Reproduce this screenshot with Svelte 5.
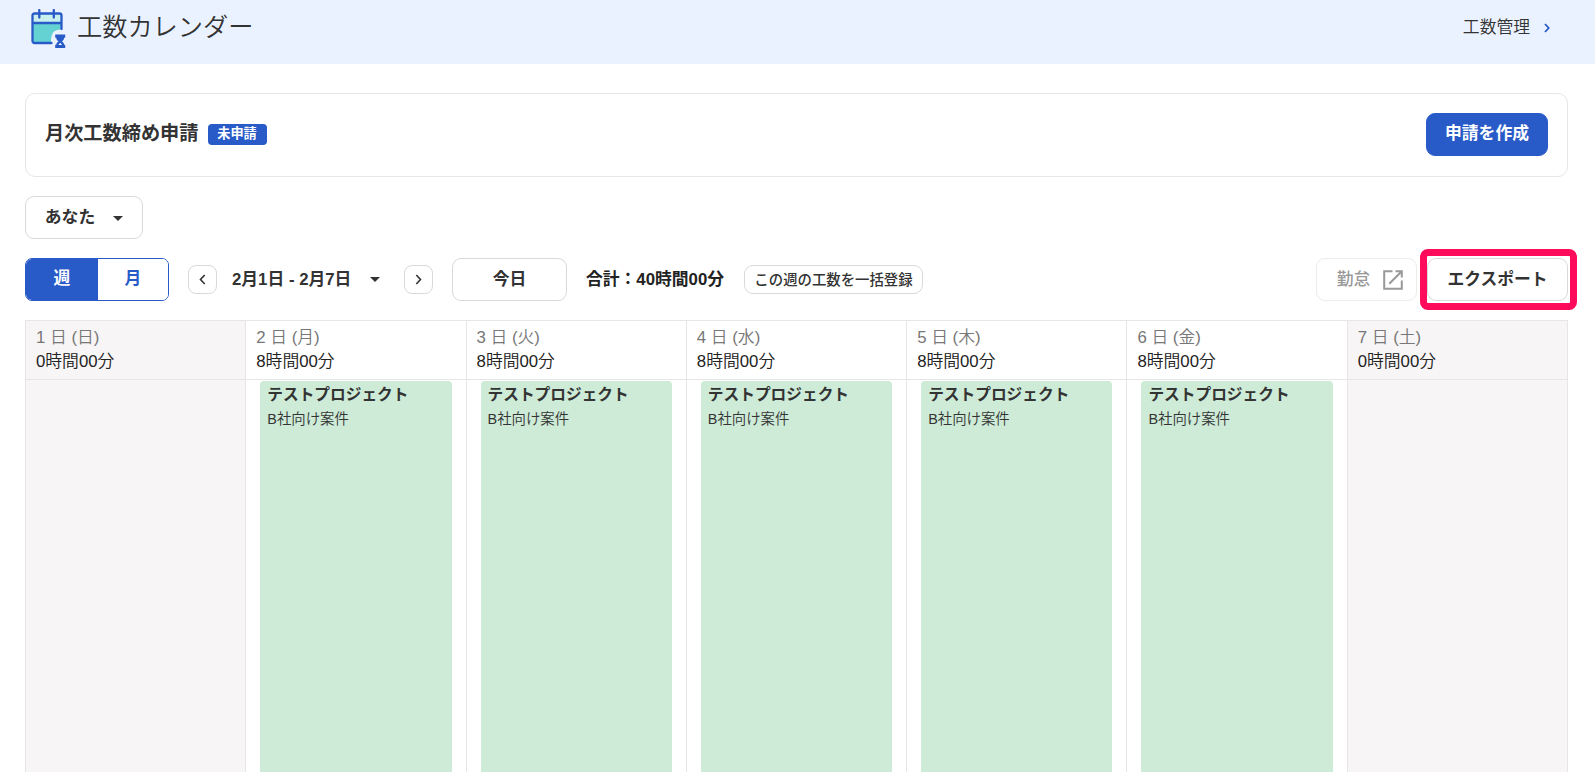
<script lang="ts">
  type Entry = { project: string; task: string };
  type Day = { date: number; weekday: string; total: string; holiday: boolean; entries: Entry[] };

  const weekdays = ["日", "月", "火", "水", "木", "金", "土"];

  const days: Day[] = weekdays.map((weekday, i) => {
    const holiday = i === 0 || i === 6;
    return {
      date: i + 1,
      weekday,
      total: holiday ? "0時間00分" : "8時間00分",
      holiday,
      entries: holiday ? [] : [{ project: "テストプロジェクト", task: "B社向け案件" }],
    };
  });

  let mode = $state<"week" | "month">("week");
</script>

<div class="page">
  <header>
    <svg class="logo" width="38" height="40" viewBox="0 0 38 40" fill="none">
      <path d="M2.500 14V6.500a2 2 0 0 1 2-2h25a2 2 0 0 1 2 2V14z" fill="#c9efee" />
      <path d="M2.500 14h29v6.500q-10-1-10.500 10v4.500H4.500a2 2 0 0 1-2-2z" fill="#64d2d2" />
      <path
        d="M21.500 34H4.500a2 2 0 0 1-2-2V6.500a2 2 0 0 1 2-2h25a2 2 0 0 1 2 2V20M2.500 14h29M9.300 1v7.500M23.800 1v7.500"
        stroke="#285ac8"
        stroke-width="2.300"
        stroke-linecap="round"
      />
      <path
        d="M25.200 25.500h10v3.200h-1.100c0 1.700-1 2.800-2.300 3.600 1.300.9 2.300 2 2.300 3.500h1.100V39h-10v-3.200h1.100c0-1.500 1-2.600 2.300-3.500-1.300-.8-2.300-1.900-2.300-3.600h-1.100z"
        fill="#285ac8"
      />
      <path d="M30.200 33.800l1.900 2.200h-3.800z" fill="#ebf2ff" />
    </svg>
    <h1>工数カレンダー</h1>
    <a class="crumb" href="#manage">
      <span>工数管理</span>
      <svg width="6" height="10" viewBox="0 0 6 10" fill="none">
        <path d="M1 1l3.700 4L1 9" stroke="#285ac8" stroke-width="1.800" />
      </svg>
    </a>
  </header>

  <main>
    <section class="card">
      <h2>月次工数締め申請</h2>
      <span class="badge">未申請</span>
      <button class="btn primary">申請を作成</button>
    </section>

    <button class="btn user">
      あなた
      <span class="caret"></span>
    </button>

    <div class="toolbar">
      <div class="segment">
        <button class:active={mode === "week"} onclick={() => (mode = "week")}>週</button>
        <button class:active={mode === "month"} onclick={() => (mode = "month")}>月</button>
      </div>

      <button class="step prev" aria-label="前の週">
        <svg width="7" height="11" viewBox="0 0 7 11" fill="none">
          <path d="M5.700 1L1.500 5.500l4.200 4.500" stroke="#333" stroke-width="1.600" />
        </svg>
      </button>
      <button class="range">
        <span>2月1日 - 2月7日</span>
        <span class="caret"></span>
      </button>
      <button class="step next" aria-label="次の週">
        <svg width="7" height="11" viewBox="0 0 7 11" fill="none">
          <path d="M1.300 1l4.200 4.500L1.300 10" stroke="#333" stroke-width="1.600" />
        </svg>
      </button>

      <button class="btn today">今日</button>
      <span class="sum">合計：40時間00分</span>
      <button class="bulk">この週の工数を一括登録</button>

      <div class="right">
        <button class="btn attendance" disabled>
          勤怠
          <svg width="20" height="20" viewBox="0 0 20 20" fill="none" stroke="#999" stroke-width="2">
            <path d="M9.500 1.200H1.200v17.600h17.600V10.500M12.500 1.200h6.300v6.300M18.500 1.500L6.300 13.700" />
          </svg>
        </button>
        <div class="export-wrap">
          <button class="btn export">エクスポート</button>
        </div>
      </div>
    </div>

    <div class="calendar">
      {#each days as day (day.date)}
        <div class="day" class:holiday={day.holiday}>
          <div class="head">
            <div class="date">{day.date} 日 ({day.weekday})</div>
            <div>{day.total}</div>
          </div>
          {#each day.entries as entry}
            <div class="entry">
              <b>{entry.project}</b>
              <span>{entry.task}</span>
            </div>
          {/each}
        </div>
      {/each}
    </div>
  </main>
</div>

<style>
  :global(body) {
    margin: 0;
    background: #fff;
  }
  .page {
    height: 772px;
    overflow: hidden;
    display: flex;
    flex-direction: column;
    font-family: "Liberation Sans", "Noto Sans CJK JP", sans-serif;
    font-size: 16.800px;
    color: #333;
  }
  .page * {
    box-sizing: border-box;
  }
  header {
    flex: none;
    height: 64px;
    padding: 0 45px 10px 30px;
    display: flex;
    align-items: center;
    background: #ebf2ff;
  }
  .logo {
    margin-top: 4px;
  }
  h1 {
    margin: 0 auto 0 9px;
    font-size: 25.200px;
    font-weight: 350;
    line-height: 36px;
  }
  .crumb {
    display: flex;
    align-items: center;
    gap: 14px;
    font-weight: 350;
    color: #333;
    text-decoration: none;
  }
  .crumb span {
    padding-bottom: 2px;
  }
  .crumb svg {
    margin-top: 2px;
  }
  main {
    flex: 1;
    min-height: 0;
    padding: 29px 27px 0 25px;
    display: flex;
    flex-direction: column;
  }
  button {
    padding: 0;
    font: inherit;
    color: inherit;
    background: #fff;
    border: 0;
  }
  .card {
    flex: none;
    height: 84px;
    padding: 0 19px 2px;
    display: flex;
    align-items: center;
    border: 1px solid #e6e6e6;
    border-radius: 10px;
  }
  h2 {
    margin: 0;
    font-size: 19.200px;
    line-height: 28px;
    font-weight: 700;
  }
  .badge {
    width: 59px;
    height: 21px;
    margin-left: 9px;
    border-radius: 4px;
    background: #285ac8;
    color: #fff;
    font-size: 13.200px;
    font-weight: 700;
    line-height: 20px;
    text-align: center;
  }
  .btn {
    height: 43px;
    display: flex;
    align-items: center;
    justify-content: center;
    border: 1px solid #d9d9d9;
    border-radius: 9px;
    font-weight: 700;
    line-height: 24px;
  }
  .primary {
    width: 122px;
    margin-left: auto;
    background: #285ac8;
    border-color: #285ac8;
    color: #fff;
  }
  .user {
    flex: none;
    width: 118px;
    margin-top: 19px;
    gap: 18px;
  }
  .caret {
    border: 5.500px solid transparent;
    border-top: 5.500px solid #333;
    border-bottom: 0;
  }
  .user .caret {
    margin-top: 2px;
  }
  .toolbar {
    flex: none;
    height: 43px;
    margin-top: 19px;
    display: flex;
    align-items: center;
  }
  .segment {
    width: 144px;
    height: 43px;
    display: flex;
    border: 1px solid #285ac8;
    border-radius: 7px;
    overflow: hidden;
  }
  .segment button {
    flex: 1;
    padding-bottom: 6px;
    color: #285ac8;
    font-weight: 700;
  }
  .segment .active {
    flex: none;
    width: 72px;
    background: #285ac8;
    color: #fff;
  }
  .step {
    width: 29px;
    height: 29px;
    display: grid;
    place-items: center;
    border: 1px solid #d9d9d9;
    border-radius: 8px;
  }
  .prev {
    margin-left: 19px;
  }
  .range {
    width: 187px;
    padding: 0 24px 0 15px;
    display: flex;
    align-items: center;
    justify-content: space-between;
    font-weight: 700;
    white-space: nowrap;
  }
  .range span:first-child {
    padding-bottom: 4px;
  }
  .today {
    width: 115px;
    margin-left: 19px;
  }
  .sum {
    width: 139px;
    margin: 0 19px;
    padding-bottom: 3px;
    font-weight: 700;
    white-space: nowrap;
    color: #222;
  }
  .bulk {
    width: 179px;
    height: 29px;
    padding-bottom: 3px;
    border: 1px solid #d9d9d9;
    border-radius: 9px;
    font-size: 14.400px;
    font-weight: 500;
    white-space: nowrap;
  }
  .right {
    margin-left: auto;
    display: flex;
    gap: 10px;
  }
  .attendance {
    width: 101px;
    padding-left: 7px;
    gap: 13px;
    border-color: #ececec;
    color: #999;
    font-weight: 500;
  }
  .export-wrap {
    position: relative;
  }
  .export {
    width: 141px;
  }
  /* highlight frame around the export button */
  .export-wrap::after {
    content: "";
    position: absolute;
    inset: -9px -9px -9px -7px;
    border: 7px solid #ff0b5c;
    border-radius: 8px;
    pointer-events: none;
  }
  .calendar {
    flex: 1;
    margin-top: 19px;
    display: grid;
    grid-template-columns: repeat(7, 1fr);
    border: 1px solid #e6e6e6;
    border-width: 1px 0 0 1px;
  }
  .day {
    display: flex;
    flex-direction: column;
    border-right: 1px solid #e6e6e6;
  }
  .holiday {
    background: #f7f5f6;
  }
  .head {
    height: 59px;
    padding: 5px 10px 0;
    border-bottom: 1px solid #e6e6e6;
    line-height: 24px;
    font-weight: 350;
    color: #222;
  }
  .date {
    color: #777;
  }
  .entry {
    flex: 1;
    margin: 1px 14px 0 14px;
    padding: 1px 7px 0;
    border-radius: 4px 4px 0 0;
    background: #cdebd7;
  }
  .entry b,
  .entry span {
    display: block;
    line-height: 25px;
    white-space: nowrap;
  }
  .entry b {
    font-size: 15.700px;
  }
  .entry span {
    font-size: 14.400px;
    font-weight: 350;
  }
</style>
